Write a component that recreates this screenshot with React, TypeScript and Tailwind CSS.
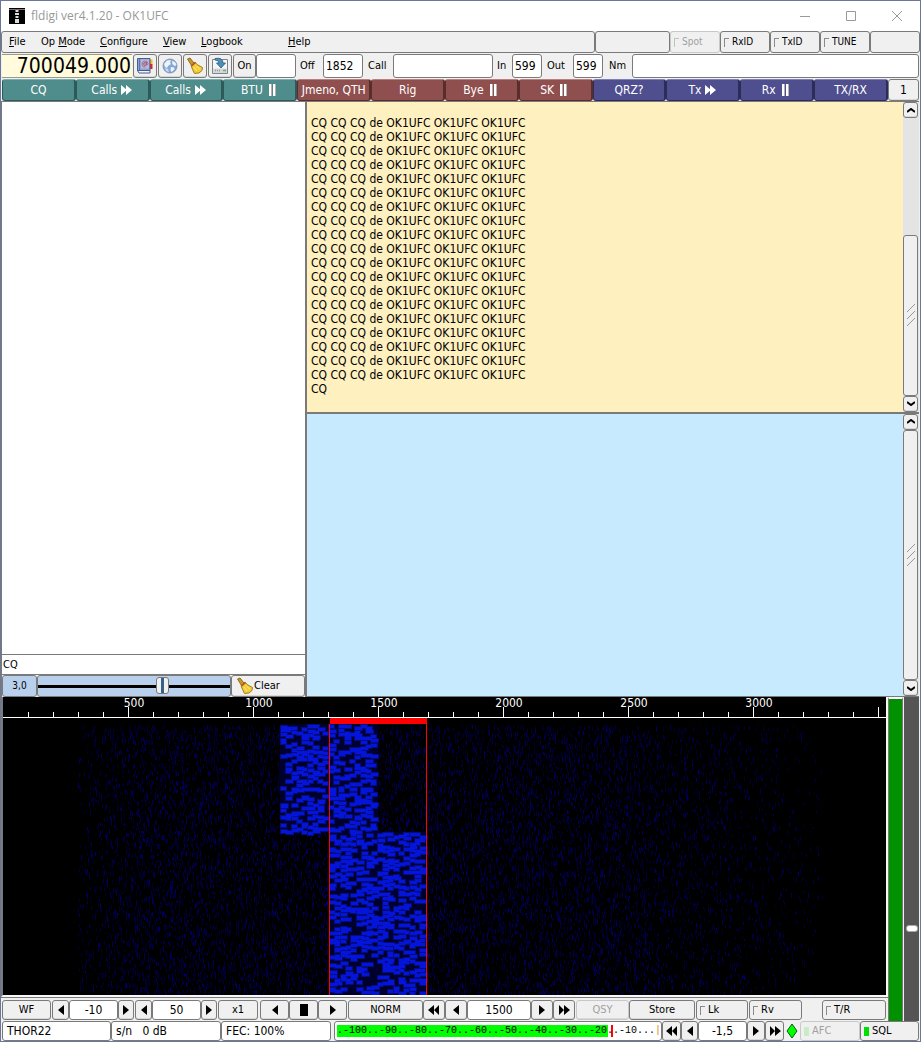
import type { ReactNode } from "react";

interface MacroKey {
  label: string;
  mark?: "skip" | "pause";
  tone: string;
}

const TEAL = "bg-[#4f8c8c] border-[#2c5a5a] border-t-[#7db0b0]";
const RED = "bg-[#8f4f4f] border-[#5a2c2c] border-t-[#b98080]";
const BLUE = "bg-[#4f4f8f] border-[#2c2c5a] border-t-[#8080b9]";

const macros: MacroKey[] = [
  { label: "CQ", tone: TEAL },
  { label: "Calls", mark: "skip", tone: TEAL },
  { label: "Calls", mark: "skip", tone: TEAL },
  { label: "BTU", mark: "pause", tone: TEAL },
  { label: "Jmeno, QTH", tone: RED },
  { label: "Rig", tone: RED },
  { label: "Bye", mark: "pause", tone: RED },
  { label: "SK", mark: "pause", tone: RED },
  { label: "QRZ?", tone: BLUE },
  { label: "Tx", mark: "skip", tone: BLUE },
  { label: "Rx", mark: "pause", tone: BLUE },
  { label: "TX/RX", tone: BLUE },
];

const menus = [
  { before: "", key: "F", after: "ile", width: "w-8" },
  { before: "Op ", key: "M", after: "ode", width: "w-[59px]" },
  { before: "", key: "C", after: "onfigure", width: "w-[63px]" },
  { before: "", key: "V", after: "iew", width: "w-[38px]" },
  { before: "", key: "L", after: "ogbook", width: "w-[87px]" },
  { before: "", key: "H", after: "elp", width: "w-8" },
];

const rxText = "\n" + "CQ CQ CQ de OK1UFC OK1UFC OK1UFC\n".repeat(19) + "CQ";

// Small seeded generator so the waterfall looks the same on every render
function seeded(seed: number) {
  let s = seed;
  return () => {
    s = (s * 1664525 + 1013904223) % 4294967296;
    return s / 4294967296;
  };
}

function noisePath(seed: number, count: number) {
  const rand = seeded(seed);
  let d = "";
  for (let i = 0; i < count; i++) {
    const x = Math.floor(75 + rand() * 745);
    const y = Math.floor(28 + rand() * 268);
    const edge = Math.min(1, (x - 60) / 70, (840 - x) / 260);
    if (rand() > edge) continue;
    d += `M${x + 0.5} ${y}v${2 + Math.floor(rand() * 4)}`;
  }
  return d;
}

// One dash per tone burst; the glow path shares the seed and runs a little wider
function tonePath(seed: number, left: number, top: number, bottom: number, spread: number) {
  const rand = seeded(seed);
  let d = "";
  for (let y = top; y < bottom; y += 4) {
    for (let col = 0; col < 18; col++) {
      const hit = rand();
      const dy = Math.floor(rand() * 4);
      const len = 5 + Math.floor(rand() * 3);
      if (hit > 0.6) continue;
      const x = Math.round(left + col * 5.3) - spread;
      d += `M${x} ${y + dy + 0.5}h${len + spread * 2}`;
    }
  }
  return d;
}

const noiseDark = noisePath(7, 12000);
const noiseMid = noisePath(91, 3600);
const signalOld = tonePath(23, 278, 29, 135, 0);
const signalNew = tonePath(58, 327, 137, 296, 0);
const glowOld = tonePath(23, 278, 29, 135, 1);
const glowNew = tonePath(58, 327, 137, 296, 1);

function Waterfall() {
  const ticks = Array.from({ length: 35 }, (_, i) => i + 1);
  return (
    <svg viewBox="0 0 883 298" preserveAspectRatio="xMinYMin slice" className="block h-[298px] w-full bg-black" role="img" aria-label="Waterfall">
      <g shapeRendering="crispEdges">
        <path d={noiseDark} stroke="#000034" />
        <path d={noiseMid} stroke="#000058" />
        <rect x="277" y="27" width="98" height="108" fill="#00002c" />
        <rect x="327" y="135" width="97" height="163" fill="#00002c" />
        <path d={glowOld} stroke="#000c80" strokeWidth="5" />
        <path d={glowNew} stroke="#000c80" strokeWidth="5" />
        <path d={signalOld} stroke="#0414d8" strokeWidth="3" />
        <path d={signalNew} stroke="#0414d8" strokeWidth="3" />
        <rect x="326" y="27" width="1" height="271" fill="#ff0000" />
        <rect x="423" y="27" width="1" height="271" fill="#ff0000" />
        <rect x="0" y="0" width="883" height="27" fill="#000000" />
        <rect x="0" y="20" width="883" height="1" fill="#ffffff" />
        <rect x="327" y="21" width="97" height="6" fill="#ff0000" />
        {ticks.map((t) => (
          <rect key={t} x={t * 25} y={t % 5 === 0 ? 10 : 15} width="1" height={t % 5 === 0 ? 10 : 5} fill="#ffffff" />
        ))}
      </g>
      <g fill="#ffffff" fontSize="12" textAnchor="middle">
        {[500, 1000, 1500, 2000, 2500, 3000].map((hz) => (
          <text key={hz} x={hz / 4 + 6} y="10">
            {hz}
          </text>
        ))}
      </g>
    </svg>
  );
}

function Arrow({ dir, double }: { dir: "left" | "right"; double?: boolean }) {
  const shape = double ? "M1 0v10l5-5zM6 0v10l6-5z" : "M3 0v10l6-5z";
  return (
    <svg viewBox="0 0 12 10" className={dir === "left" ? "h-[10px] w-3 rotate-180" : "h-[10px] w-3"} aria-hidden="true">
      <path d={shape} fill="currentColor" />
    </svg>
  );
}

function Btn({ children, className, label, disabled }: { children?: ReactNode; className: string; label?: string; disabled?: boolean }) {
  return (
    <button
      type="button"
      aria-label={label}
      disabled={disabled}
      className={`flex shrink-0 items-center justify-center rounded-[3px] border border-[#7a7a7a] bg-[#f0f0f0] shadow-[inset_0_-1px_0_#d8d8d8] disabled:border-[#c8c8c8] disabled:text-[#a0a0a0] ${className}`}
    >
      {children}
    </button>
  );
}

function Field({ label, value, className }: { label: string; value: string; className: string }) {
  return (
    <input
      aria-label={label}
      defaultValue={value}
      className={`min-w-0 rounded-[3px] border border-[#7a7a7a] bg-white outline-none ${className}`}
    />
  );
}

function Light({ label, on, disabled, className }: { label: string; on?: boolean; disabled?: boolean; className: string }) {
  return (
    <label
      className={`flex shrink-0 items-center gap-[3px] rounded-[3px] border bg-[#f0f0f0] pl-[3px] ${disabled ? "border-[#c8c8c8] text-[#a0a0a0]" : "border-[#7a7a7a]"} ${className}`}
    >
      <input
        type="checkbox"
        defaultChecked={on}
        disabled={disabled}
        className="h-[9px] w-[5px] shrink-0 appearance-none border-t border-l border-[#8a8a8a] checked:border-0 checked:bg-[#00e000] disabled:border-[#b8c8b8] disabled:checked:bg-[#c8ecc8]"
      />
      {label}
    </label>
  );
}

function Broom() {
  return (
    <svg viewBox="0 0 18 18" className="h-[18px] w-[18px] shrink-0" aria-hidden="true">
      <path d="M1.500 2l2.500-1 4 5-2.500 2.500z" fill="#c89828" stroke="#7a5410" strokeWidth=".8" />
      <path d="M5 8.500l4-3.500 2 2.500 5.500 3-.5 3-3 2.500-4.500.5-2-4z" fill="#f0cc30" stroke="#9a7410" strokeWidth=".9" />
      <path d="M5.500 9l4-3.500" stroke="#c04820" strokeWidth="1.400" />
      <path d="M8 10l3 4M10 8.500l4 4" stroke="#fff0a0" />
    </svg>
  );
}

function BookIcon() {
  return (
    <svg viewBox="0 0 18 18" className="h-[18px] w-[18px]" aria-hidden="true">
      <path d="M14 2.500h2.500V7H14z" fill="#f0c020" />
      <path d="M14 7h2.500v5H14z" fill="#e02020" />
      <path d="M1.500 1.500H14v12H1.500z" fill="#8ca4d0" stroke="#4a5c90" />
      <path d="M1.500 13.500H14v2.500H3z" fill="#f4f4f4" stroke="#4a5c90" />
      <path d="M3.500 2v11" stroke="#6078b0" />
      <rect x="5" y="2.500" width="8" height="9" fill="#b4bcdc" />
      <circle cx="9" cy="7" r="1.400" fill="none" stroke="#b05078" />
      <path d="M10.500 5v3q1.500 0 1.500-1.500A3 3 0 1 0 9.500 10" fill="none" stroke="#b05078" strokeWidth=".8" />
    </svg>
  );
}

function GlobeIcon() {
  return (
    <svg viewBox="0 0 16 16" className="h-4 w-4" aria-hidden="true">
      <circle cx="8" cy="8" r="7" fill="#86a8d8" stroke="#7888a8" strokeWidth=".8" />
      <path d="M2 6l3-3.500 4-.5-1 2.500 1 1.500-3 2-1 2-2-1zM10 3l3 1 1.500 3-2 1-2-2zM9 9l3 .5.5 2-3 2.500-1-2z" fill="#eef4fa" />
      <path d="M3 10l3 1 1 3-3-1z" fill="#c8dcf0" />
    </svg>
  );
}

function SaveIcon() {
  return (
    <svg viewBox="0 0 18 18" className="h-[18px] w-[18px]" aria-hidden="true">
      <path d="M1.500 2.500h15v14h-15z" fill="#f6f6f6" stroke="#7c868c" />
      <path d="M2 11.500h14v4.500H2z" fill="#d4d8da" />
      <path d="M4 1.500q8-1.500 8 4.500h2.500L10 11 5.500 6H8q0-3-4-3z" fill="#4c90b8" stroke="#285c80" strokeWidth=".8" />
      <path d="M4 13.500h6" stroke="#8c9498" strokeWidth="1.500" strokeDasharray="1 1" />
      <path d="M12 13.500h3" stroke="#78a878" strokeWidth="1.500" />
    </svg>
  );
}

function ScrollBar({ name, thumb }: { name: string; thumb: string }) {
  return (
    <div className="flex w-4 shrink-0 flex-col bg-[#e4e4e4]">
      <Btn className="h-4 w-[15px]" label={`${name} up`}>
        <svg viewBox="0 0 8 5" className="h-[5px] w-2">
          <path d="M0 4l4-3 4 3" fill="none" stroke="#000" strokeWidth="2" />
        </svg>
      </Btn>
      <div className="flex min-h-0 flex-1 flex-col justify-end">
        <div className={`flex w-[15px] items-center justify-center rounded-[3px] border border-[#7a7a7a] bg-[#f0f0f0] ${thumb}`}>
          <svg viewBox="0 0 8 22" className="h-[22px] w-2">
            <path d="M0 8l8-8M0 15l8-8M0 22l8-8" stroke="#999" />
          </svg>
        </div>
      </div>
      <Btn className="h-4 w-[15px]" label={`${name} down`}>
        <svg viewBox="0 0 8 5" className="h-[5px] w-2">
          <path d="M0 1l4 3 4-3" fill="none" stroke="#000" strokeWidth="2" />
        </svg>
      </Btn>
    </div>
  );
}

function MacroMark({ mark }: { mark: "skip" | "pause" }) {
  if (mark === "skip") {
    return (
      <svg viewBox="0 0 12 10" className="h-[10px] w-3" aria-hidden="true">
        <path d="M0 0v10l6-5zM5 0v10l6-5z" fill="#fff" />
      </svg>
    );
  }
  return (
    <svg viewBox="0 0 12 12" className="h-3 w-3" aria-hidden="true">
      <path d="M2 0h3v12H2zM6 0h3v12H6z" fill="#fff" />
      <path d="M4.500 0v12M8.500 0v12" stroke="#b8b0b0" />
    </svg>
  );
}

function TitleBar() {
  return (
    <header className="flex h-[30px] items-center bg-white pl-2 text-[#999999]">
      <svg viewBox="0 0 16 16" className="h-4 w-4" aria-hidden="true">
        <path d="M0 0h16v16H0z" fill="#000" />
        <path d="M6.500 2h3v2h-3zM6 5h4v2H6zM6.500 8h3v2h-3zM6 11h4v4H6z" fill="#ddd" />
        <path d="M0 1.500h16" stroke="#777" />
        <path d="M7 1h2v1H7z" fill="#d04040" />
      </svg>
      <h1 className="ml-[6px] flex-1 font-['Open_Sans',sans-serif] text-[12px]">fldigi ver4.1.20 - OK1UFC</h1>
      <button type="button" aria-label="Minimize" className="flex w-[46px] justify-center">
        <svg viewBox="0 0 10 10" className="h-[10px] w-[10px]"><path d="M0 5.500h10" stroke="currentColor" /></svg>
      </button>
      <button type="button" aria-label="Maximize" className="flex w-[46px] justify-center">
        <svg viewBox="0 0 10 10" className="h-[10px] w-[10px]"><path d="M.5.5h9v9h-9z" fill="none" stroke="currentColor" /></svg>
      </button>
      <button type="button" aria-label="Close" className="flex w-[46px] justify-center">
        <svg viewBox="0 0 10 10" className="h-[10px] w-[10px]"><path d="M0 0l10 10M10 0L0 10" stroke="currentColor" /></svg>
      </button>
    </header>
  );
}

export default function App() {
  return (
    <div className="flex min-h-screen flex-col border border-[#6c7698] bg-[#f0f0f0] font-['DejaVu_Sans_Condensed','Noto_Sans',sans-serif] text-[12px] leading-[14px] text-black">
      <TitleBar />

      <div className="flex h-[22px]">
        <nav className="flex min-w-0 flex-1 items-center rounded-[3px] border border-[#7a7a7a] pl-[7px] text-[11px]">
          {menus.map((m) => (
            <button type="button" key={m.key} className={`shrink-0 text-left whitespace-nowrap ${m.width}`}>
              {m.before}
              <span className="underline">{m.key}</span>
              {m.after}
            </button>
          ))}
        </nav>
        <div className="w-[75px] shrink-0 rounded-[3px] border border-[#7a7a7a]" />
        <Light label="Spot" disabled className="w-[50px] text-[10px]" />
        <Light label="RxID" className="w-[50px] text-[10px]" />
        <Light label="TxID" className="w-[50px] text-[10px]" />
        <Light label="TUNE" className="w-[50px] text-[10px]" />
        <div className="w-[50px] shrink-0 rounded-[3px] border border-[#7a7a7a]" />
      </div>

      <div className="flex h-[26px] items-center px-px">
        <output className="flex h-6 w-[130px] shrink-0 items-center justify-end border-y border-[#9a9a8a] bg-[#fffbdc] pr-px text-[21px]">700049.000</output>
        <div className="flex h-6 gap-px pl-px">
          <Btn className="w-6" label="Address book"><BookIcon /></Btn>
          <Btn className="w-6" label="Web lookup"><GlobeIcon /></Btn>
          <Btn className="w-6" label="Clear fields"><Broom /></Btn>
          <Btn className="w-6" label="Save contact"><SaveIcon /></Btn>
          <Btn className="w-[23px] text-[11px]">On</Btn>
        </div>
        <Field label="Time on" value="" className="h-6 w-10 shrink-0" />
        <span className="w-[27px] shrink-0 pl-1 text-[11px]">Off</span>
        <Field label="Time off" value="1852" className="h-6 w-10 shrink-0 px-[2px]" />
        <span className="w-[30px] shrink-0 pl-[5px] text-[11px]">Call</span>
        <Field label="Call" value="" className="h-6 w-[100px] shrink-0" />
        <span className="w-[19px] shrink-0 pl-1 text-[11px]">In</span>
        <Field label="In" value="599" className="h-6 w-[30px] shrink-0 px-[2px]" />
        <span className="w-[31px] shrink-0 pl-[5px] text-[11px]">Out</span>
        <Field label="Out" value="599" className="h-6 w-[30px] shrink-0 px-[2px]" />
        <span className="w-[29px] shrink-0 pl-[6px] text-[11px]">Nm</span>
        <Field label="Name" value="" className="h-6 flex-1" />
      </div>

      <div className="flex h-[22px] px-px">
        {macros.map((m, i) => (
          <button
            type="button"
            key={i}
            className={`flex min-w-0 flex-1 items-center justify-center gap-1 overflow-hidden rounded-[3px] border border-r-2 whitespace-nowrap text-white ${m.tone}`}
          >
            {m.label}
            {m.mark && <MacroMark mark={m.mark} />}
          </button>
        ))}
        <Btn className="w-[31px]">1</Btn>
      </div>

      <main className="flex min-h-[400px] flex-1 pr-px">
        <section className="flex min-w-0 flex-[304] flex-col border-l border-[#7a7a7a]">
          <div className="flex-1 border-y border-[#7a7a7a] bg-white" />
          <input aria-label="Search" defaultValue="CQ" className="h-5 border-b border-[#7a7a7a] bg-white px-px text-[11px] outline-none" />
          <div className="flex h-[22px]">
            <output className="flex w-[35px] items-center justify-center rounded-[3px] border border-[#7a7a7a] bg-[#b8d0ec] text-[10px]">3,0</output>
            <div className="flex min-w-0 flex-1 rounded-[3px] border border-[#7a7a7a] bg-[#b8d0ec]">
              <input
                type="range"
                aria-label="Squelch"
                defaultValue={66}
                className="h-full w-full appearance-none bg-transparent [&::-webkit-slider-runnable-track]:flex [&::-webkit-slider-runnable-track]:h-[18px] [&::-webkit-slider-runnable-track]:items-center [&::-webkit-slider-runnable-track]:bg-[linear-gradient(#000,#000)] [&::-webkit-slider-runnable-track]:bg-[length:100%_3px] [&::-webkit-slider-runnable-track]:bg-center [&::-webkit-slider-runnable-track]:bg-no-repeat [&::-webkit-slider-thumb]:h-[17px] [&::-webkit-slider-thumb]:w-[13px] [&::-webkit-slider-thumb]:appearance-none [&::-webkit-slider-thumb]:rounded-[3px] [&::-webkit-slider-thumb]:border [&::-webkit-slider-thumb]:border-[#7a7a7a] [&::-webkit-slider-thumb]:bg-[linear-gradient(90deg,#f0f0f0_4px,#34608a_4px,#34608a_7px,#f0f0f0_7px)]"
              />
            </div>
            <Btn className="w-[74px] pr-5 text-[11px]"><Broom />Clear</Btn>
          </div>
        </section>

        <section className="flex min-w-0 flex-[614] flex-col border-l-2 border-[#7a7a7a]">
          <div className="flex min-h-0 flex-[311] border-y border-[#7a7a7a] bg-[#fff0c0]">
            <textarea aria-label="Received text" readOnly defaultValue={rxText} className="min-w-0 flex-1 resize-none overflow-hidden bg-transparent px-1 outline-none" />
            <ScrollBar name="Receive" thumb="h-[58%]" />
          </div>
          <div className="flex min-h-0 flex-[283] border-y border-[#7a7a7a] bg-[#c8eaff]">
            <textarea aria-label="Transmit text" className="min-w-0 flex-1 resize-none overflow-hidden bg-transparent px-1 outline-none" />
            <ScrollBar name="Transmit" thumb="h-full" />
          </div>
        </section>
      </main>

      <div className="flex pr-px">
        <div className="flex min-w-0 flex-1 flex-col">
          <div className="border-2 border-t-0 border-[#f8f8f8] border-l-[#7a7a7a]">
            <Waterfall />
          </div>
          <div className="flex h-6 border-t border-[#7a7a7a] pt-[2px] pb-px pl-px">
            <Btn className="w-[49px] text-[11px]">WF</Btn>
            <div className="ml-px flex">
              <Btn className="w-[17px]" label="Lower level"><Arrow dir="left" /></Btn>
              <Field label="Upper signal level" value="-10" className="w-[49px] text-center" />
              <Btn className="w-4" label="Raise level"><Arrow dir="right" /></Btn>
            </div>
            <div className="ml-px flex">
              <Btn className="w-[17px]" label="Lower range"><Arrow dir="left" /></Btn>
              <Field label="Signal range" value="50" className="w-[49px] text-center" />
              <Btn className="w-4" label="Raise range"><Arrow dir="right" /></Btn>
            </div>
            <Btn className="ml-px w-10 text-[11px]">x1</Btn>
            <div className="ml-[2px] flex">
              <Btn className="w-[29px]" label="Shift left"><Arrow dir="left" /></Btn>
              <Btn className="w-[29px]" label="Center signal">
                <svg viewBox="0 0 8 12" className="h-3 w-2"><path d="M0 0h8v12H0z" /></svg>
              </Btn>
              <Btn className="w-[29px]" label="Shift right"><Arrow dir="right" /></Btn>
            </div>
            <Btn className="ml-px w-[75px] text-[11px]">NORM</Btn>
            <Btn className="w-[22px]" label="Much lower frequency"><Arrow dir="left" double /></Btn>
            <Btn className="w-[22px]" label="Lower frequency"><Arrow dir="left" /></Btn>
            <Field label="Audio frequency" value="1500" className="w-16 shrink-0 text-center" />
            <Btn className="w-[22px]" label="Higher frequency"><Arrow dir="right" /></Btn>
            <Btn className="w-[22px]" label="Much higher frequency"><Arrow dir="right" double /></Btn>
            <Btn className="ml-px w-[53px] text-[11px]" disabled>QSY</Btn>
            <Btn className="w-[66px] text-[11px]">Store</Btn>
            <Light label="Lk" className="ml-px w-[52px] text-[11px]" />
            <Light label="Rv" className="ml-px w-[53px] text-[11px]" />
            <Light label="T/R" className="mr-[2px] ml-auto w-16 text-[11px]" />
          </div>
        </div>
        <div className="mr-px w-[15px] shrink-0 border-x border-t-2 border-[#7a7a7a] border-t-white bg-[#009000]" />
        {/* size containment keeps the vertical range from setting the row height */}
        <div className="w-[15px] shrink-0 bg-[#555555] contain-size">
          <input
            type="range"
            aria-label="Squelch level"
            defaultValue={72}
            className="block h-full w-full appearance-none bg-transparent [writing-mode:vertical-lr] [&::-webkit-slider-thumb]:h-[7px] [&::-webkit-slider-thumb]:w-[12px] [&::-webkit-slider-thumb]:appearance-none [&::-webkit-slider-thumb]:rounded-[3px] [&::-webkit-slider-thumb]:border [&::-webkit-slider-thumb]:border-[#aaaaaa] [&::-webkit-slider-thumb]:bg-white"
          />
        </div>
      </div>

      <footer className="flex h-5 px-px text-[12px]">
        <output className="flex w-[109px] items-center rounded-[3px] border border-[#7a7a7a] bg-white pl-1">THOR22</output>
        <output className="flex w-[110px] items-center rounded-[3px] border border-[#7a7a7a] bg-white pl-1 whitespace-pre">s/n   0 dB</output>
        <output className="mr-[3px] flex w-[110px] items-center rounded-[3px] border border-[#7a7a7a] bg-white pl-1">FEC: 100%</output>
        <div className="flex min-w-0 flex-1 items-center overflow-hidden rounded-[3px] border border-[#7a7a7a] bg-white pl-[2px]">
          <div className="flex h-3 items-center bg-[linear-gradient(90deg,#00ff00_271px,#fff_271px,#fff_274px,#ff0000_274px,#ff0000_276px,#fff_276px)] font-['Liberation_Mono',monospace] text-[10px] leading-3 whitespace-pre">
            .-100..-90..-80..-70..-60..-50..-40..-30..-20..-10...<span className="text-[#e08020]">|</span>
          </div>
        </div>
        <Btn className="w-[19px]" label="AFC much lower"><Arrow dir="left" double /></Btn>
        <Btn className="w-[17px]" label="AFC lower"><Arrow dir="left" /></Btn>
        <Field label="Level" value="-1,5" className="w-[49px] shrink-0 text-center" />
        <Btn className="w-[18px]" label="AFC higher"><Arrow dir="right" /></Btn>
        <Btn className="w-[19px]" label="AFC much higher"><Arrow dir="right" double /></Btn>
        <svg viewBox="0 0 16 20" className="h-5 w-4 shrink-0" aria-hidden="true">
          <path d="M8 3l5 7-5 7-5-7z" fill="#00ff00" stroke="#006000" />
        </svg>
        <Light label="AFC" on disabled className="w-[60px] text-[11px]" />
        <Light label="SQL" on className="w-[59px] text-[11px]" />
      </footer>
    </div>
  );
}
